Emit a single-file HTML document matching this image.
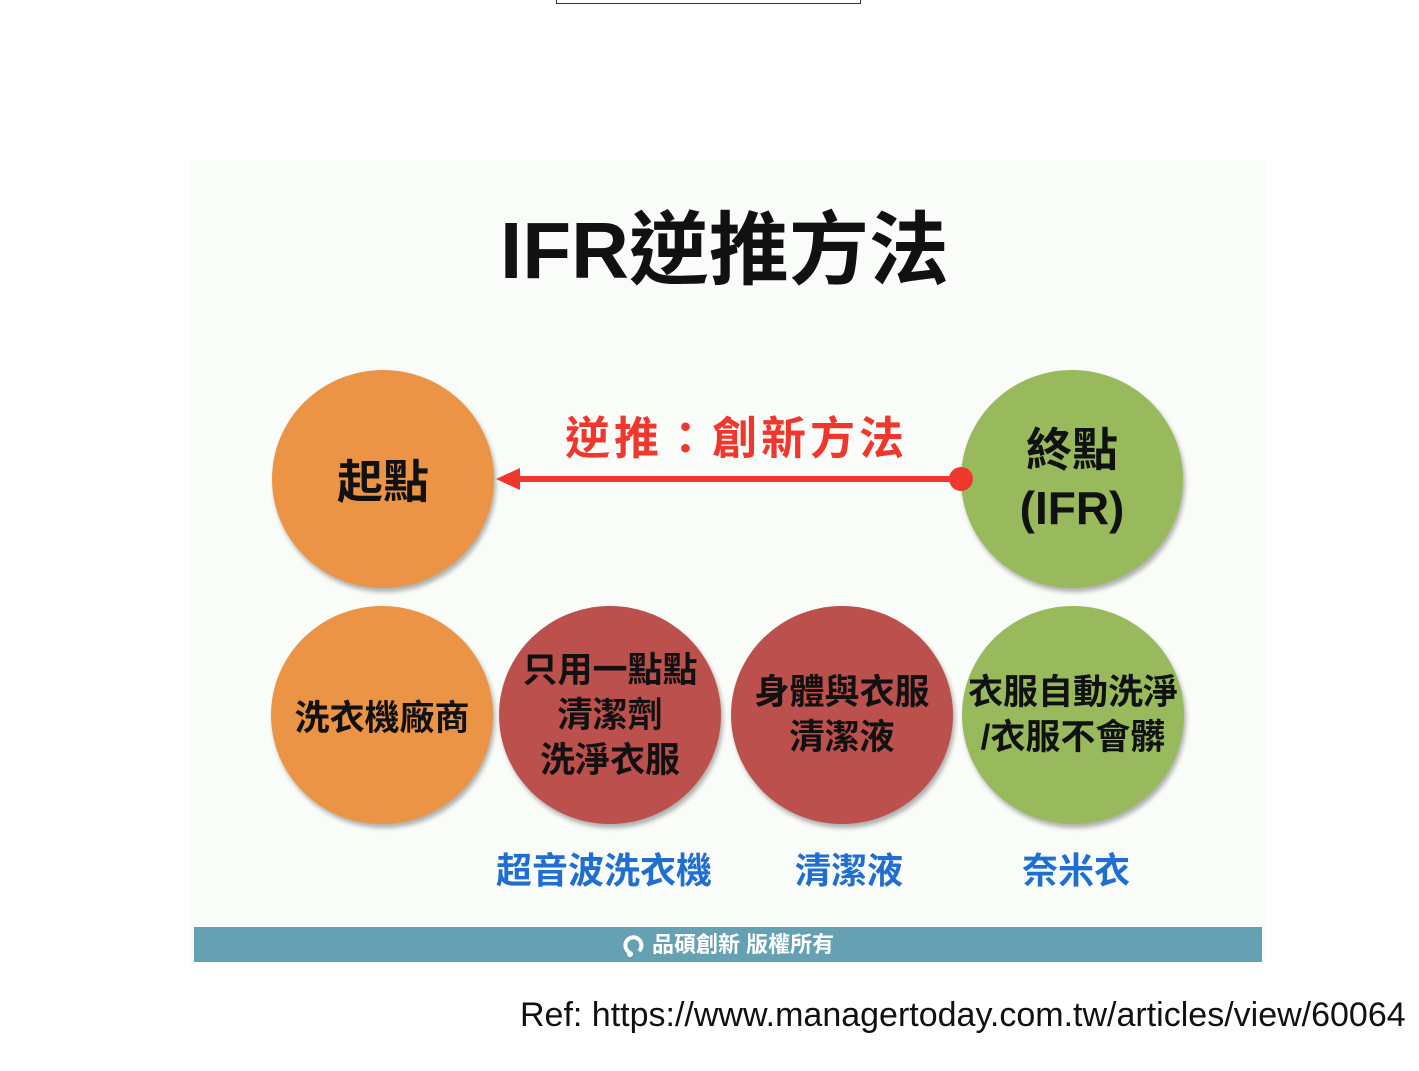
<!DOCTYPE html>
<html><head><meta charset="utf-8"><style>
body{margin:0;width:1419px;height:1071px;background:#fff;position:relative;overflow:hidden;font-family:"Liberation Sans","Noto Sans CJK TC",sans-serif}
.a{position:absolute}
.panel{left:190px;top:160px;width:1075px;height:805px;background:#fafcf9}
.c{position:absolute;border-radius:50%;display:flex;align-items:center;justify-content:center;text-align:center;font-weight:bold;color:#111;box-shadow:2px 4px 5px rgba(0,0,0,.3);white-space:nowrap}
.o{background:#ec9446}.g{background:#98ba5c}.r{background:#bc504c}
.t{font-size:80px;font-weight:bold;color:#111;left:500px;top:186px;letter-spacing:0px}
.blue{color:#1f6fd0;font-size:36px;font-weight:bold;position:absolute}
</style></head><body>
<div class="a" style="left:556px;top:-1px;width:303px;height:4px;border:1px solid #333;border-top:none"></div>
<div class="a panel"></div>
<div class="a t">IFR逆推方法</div>
<div class="c o" style="left:272px;top:370px;width:222px;height:218px;font-size:46px">起點</div>
<div class="c g" style="left:961px;top:370px;width:222px;height:218px;font-size:46px;line-height:58px">終點<br>(IFR)</div>
<div class="a" style="left:565px;top:402px;color:#f0372e;font-size:45px;font-weight:bold;letter-spacing:4px">逆推：創新方法</div>
<div class="a" style="left:510px;top:476px;width:452px;height:6px;background:#f0372e"></div>
<div class="a" style="left:496px;top:468px;width:0;height:0;border-top:11px solid transparent;border-bottom:11px solid transparent;border-right:24px solid #f0372e"></div>
<div class="a" style="left:949px;top:467px;width:24px;height:24px;border-radius:50%;background:#f0372e"></div>
<div class="c o" style="left:271px;top:606px;width:222px;height:218px;font-size:35px">洗衣機廠商</div>
<div class="c r" style="left:499px;top:606px;width:222px;height:218px;font-size:35px;line-height:45px">只用一點點<br>清潔劑<br>洗淨衣服</div>
<div class="c r" style="left:731px;top:606px;width:222px;height:218px;font-size:35px;line-height:45px">身體與衣服<br>清潔液</div>
<div class="c g" style="left:962px;top:606px;width:222px;height:218px;font-size:35px;line-height:45px">衣服自動洗淨<br>/衣服不會髒</div>
<div class="blue" style="left:496px;top:842px">超音波洗衣機</div>
<div class="blue" style="left:795px;top:842px">清潔液</div>
<div class="blue" style="left:1022px;top:842px">奈米衣</div>
<div class="a" style="left:194px;top:927px;width:1068px;height:35px;background:#65a0b3;color:#fff;font-size:22px;font-weight:bold;text-align:center;line-height:35px"><svg width="24" height="26" viewBox="0 0 24 26" style="vertical-align:-6px"><path d="M7 20 A8 8 0 1 1 17 19" fill="none" stroke="#fff" stroke-width="4"/><circle cx="8" cy="22" r="3" fill="#fff"/></svg> 品碩創新 版權所有</div>
<div class="a" style="left:520px;top:996px;font-size:34px;color:#111;white-space:nowrap">Ref: https://www.managertoday.com.tw/articles/view/60064</div>
</body></html>
